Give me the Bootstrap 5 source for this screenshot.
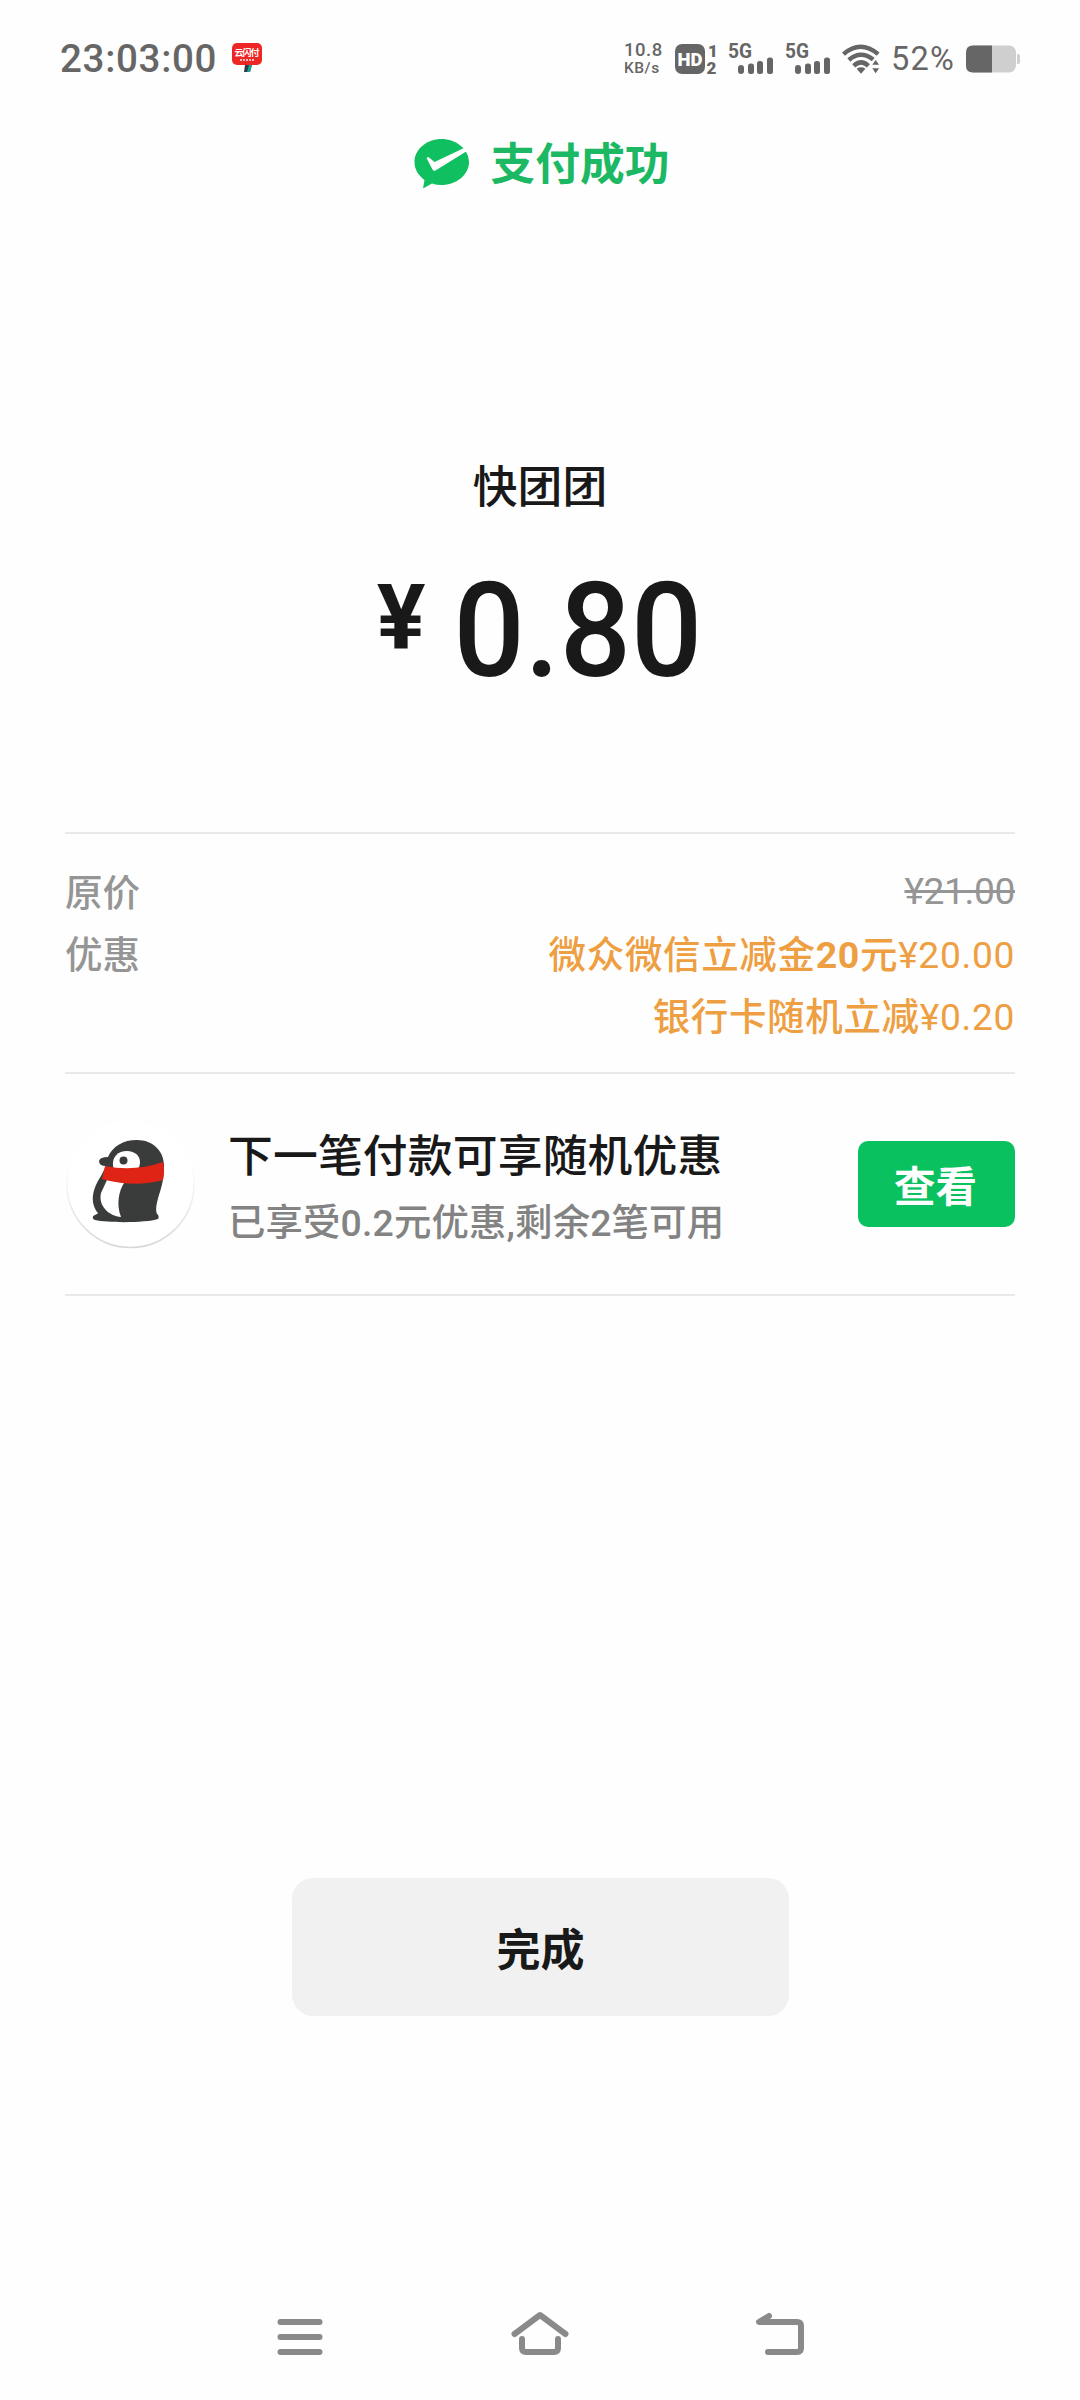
<!DOCTYPE html>
<html lang="zh-CN">
<head>
<meta charset="utf-8">
<meta name="viewport" content="width=device-width, initial-scale=1">
<title>支付成功</title>
<link rel="stylesheet" href="https://cdn.jsdelivr.net/npm/bootstrap@5.3.0/dist/css/bootstrap.min.css">
<style>
  body { background: #fefefe; color: #191919; font-family: Roboto, "Noto Sans CJK SC", sans-serif; }
  svg { display: block; flex: none; overflow: visible; }
  .screen { width: 1080px; height: 2400px; overflow: hidden; }
  .status { height: 117px; padding: 0 60px; color: #666; line-height: 1; }
  .clock { font-size: 38.5px; font-weight: 500; width: 172px; letter-spacing: .7px; padding-top: 2px; }
  .speed { width: 51px; font-weight: 500; }
  .speed-num { font-size: 18.5px; line-height: 19px; letter-spacing: .5px; }
  .speed-unit { font-size: 15.5px; line-height: 16px; letter-spacing: .5px; }
  .pct { font-size: 32.5px; width: 75px; letter-spacing: 1.2px; padding-top: 1px; }
  .result { height: 94px; padding: 3px 0 0 4px; gap: 20px; color: #1cb864; font-size: 44.8px; font-weight: 700; line-height: 1; }
  .payee { margin-top: 248px; height: 58px; font-size: 44.8px; line-height: 58px; font-weight: 500; }
  .amount { margin-top: 48px; height: 135px; padding-left: 5px; line-height: 1; font-weight: 500; }
  .yen { font-size: 91px; margin: 8px 21px 0 0; font-weight: 700; }
  .sum { font-size: 132px; transform: scaleX(.95); }
  .panel { margin: 132px 65px 0; }
  .rule { border-top: 2px solid #e9e9e9; }
  .prices { height: 240px; padding-top: 28px; font-size: 37.5px; line-height: 62px; font-weight: 500; }
  .muted { color: #959595; }
  .deal { color: #ee9f42; letter-spacing: .65px; }
  .fig { font-size: 37.2px; font-weight: 400; }
  .old { letter-spacing: -.4px; position: relative; top: -2px; }
  .promo { height: 222px; }
  .promo-text { padding-top: 8px; margin-left: 33px; }
  .promo-title { font-size: 44.8px; line-height: 60px; font-weight: 500; letter-spacing: .15px; }
  .promo-sub { font-size: 37.4px; line-height: 54px; font-weight: 500; color: #838383; margin-top: 9px; letter-spacing: .15px; }
  .view { width: 157px; height: 86px; border-radius: 10px; background: #0ac160; color: #fff; font-size: 41.5px; font-weight: 700; line-height: 1; padding: 7px 2px 0 0; border: 0; }
  .done { width: 497px; height: 138px; margin-top: 582px; border-radius: 21px; background: #f1f1f1; color: #191919; font-size: 44px; font-weight: 700; line-height: 1; padding: 8px 0 0 1px; border: 0; }
  .keys { margin-top: 296px; height: 50px; padding: 0 275px; }
</style>
</head>
<body>
<main class="screen d-flex flex-column">
  <header class="status d-flex align-items-center">
    <div class="clock">23:03:00</div>
    <svg width="31" height="31" viewBox="0 0 31 31">
      <path d="M13 22h7l-2 7h-6z" fill="#333a48"/><path d="M17 22h3l-2 7h-3z" fill="#14a595"/>
      <rect width="30" height="22" y="0" rx="5" fill="#ee2625"/>
      <text x="2.5" y="13" font-size="9" font-weight="700" fill="#fff" textLength="25">云闪付</text>
      <path d="M8 17h15" stroke="#fff" stroke-width="2" stroke-dasharray="2 1" opacity=".7"/>
    </svg>
    <div class="ms-auto d-flex align-items-center">
      <div class="speed"><div class="speed-num">10.8</div><div class="speed-unit">KB/s</div></div>
      <svg width="53" height="30" viewBox="0 0 53 30" fill="#666">
        <rect width="30" height="30" rx="7"/>
        <text x="2.500" y="22" font-size="19" font-weight="900" fill="#fff" textLength="25" lengthAdjust="spacingAndGlyphs">HD</text>
        <text x="33" y="12.500" font-size="17" font-weight="900">1</text>
        <text x="31.500" y="29.500" font-size="17" font-weight="900">2</text>
      </svg>
      <svg width="57" height="30" viewBox="0 0 57 30" fill="#666">
        <text x="0" y="14" font-size="20" font-weight="700" textLength="24" lengthAdjust="spacingAndGlyphs">5G</text>
        <rect x="10" y="21" width="6" height="9" rx="3"/><rect x="20" y="19.500" width="6" height="10.500" rx="2.500"/><rect x="29" y="17" width="6" height="13" rx="2.500"/><rect x="39" y="13.500" width="6" height="16.500" rx="2.500"/>
      </svg>
      <svg width="57" height="30" viewBox="0 0 57 30" fill="#666">
        <text x="0" y="14" font-size="20" font-weight="700" textLength="24" lengthAdjust="spacingAndGlyphs">5G</text>
        <rect x="10" y="21" width="6" height="9" rx="3"/><rect x="20" y="19.500" width="6" height="10.500" rx="2.500"/><rect x="29" y="17" width="6" height="13" rx="2.500"/><rect x="39" y="13.500" width="6" height="16.500" rx="2.500"/>
      </svg>
      <svg class="me-2" width="41" height="30" viewBox="0 0 42 30">
        <g fill="none" stroke="#666" stroke-width="4.600"><path d="M1.500 10Q19 -5 37 10"/><path d="M7 16Q19 5.500 32 15.500"/><path d="M12 22Q19.500 15 27 22"/></g>
        <path d="M15 25q4.500-3 9 0l-4.500 5zM31 21l3.500-5 3.500 5zM31 24.500l3.500 5 3.500-5z" fill="#666"/>
      </svg>
      <div class="pct">52%</div>
      <svg width="54" height="28" viewBox="0 0 54 28">
        <rect width="50" height="27" y=".5" rx="7" fill="#cfcfcf"/><path d="M51 9h1q2 0 2 2v6q0 2-2 2h-1z" fill="#cfcfcf"/>
        <path d="M7 .5h19v27H7q-7 0-7-7v-13q0-7 7-7z" fill="#666"/>
      </svg>
    </div>
  </header>

  <section class="result d-flex justify-content-center align-items-center">
    <svg class="mb-1" width="56" height="52" viewBox="0 0 56 52">
      <path d="M27.500 1C42 1 55 11 55 24S42 47 27.500 47q-5 0-9.500-1.500L9 50.500l1.500-8.500C4.500 37.500.500 31.500.500 24 .500 11 13 1 27.500 1z" fill="#10bf5f"/>
      <path d="M12.500 20l2-1 6 5L50 10l3 3L21.500 32.500q-2 1-3-1z" fill="#fefefe"/>
    </svg>
    <span>支付成功</span>
  </section>

  <div class="payee text-center">快团团</div>
  <div class="amount d-flex justify-content-center align-items-start"><span class="yen">¥</span><span class="sum">0.80</span></div>

  <section class="panel">
    <div class="prices rule">
      <div class="d-flex justify-content-between muted"><span>原价</span><s class="fig old">¥21.00</s></div>
      <div class="d-flex justify-content-between"><span class="muted">优惠</span>
        <div class="deal text-end">
          <div>微众微信立减金<b>20</b>元<span class="fig">¥20.00</span></div>
          <div>银行卡随机立减<span class="fig">¥0.20</span></div>
        </div>
      </div>
    </div>
    <div class="promo rule d-flex align-items-center">
      <svg width="130" height="130" viewBox="0 0 130 130">
        <defs><linearGradient id="ring" x2="0" y2="1"><stop offset=".35" stop-color="#fefefe"/><stop offset="1" stop-color="#d8d8d8"/></linearGradient></defs>
        <circle cx="65.500" cy="65" r="63.500" fill="#fff" stroke="url(#ring)" stroke-width="1.500"/>
        <g transform="translate(0 1)">
          <path d="M43 37C48 26 58 20 72 20c16 0 27 11 27 26 0 12-2 20-5 29-2 7-4 14-2 19 2 1 2 4 1 5-12 4-50 4-63 1-3-1-3-4 0-5 1-1 3-1 3-2C24 82 28 68 36 56l5-10q-7 0-7-5 1-4 9-4z" fill="#3a3c3b"/>
          <path d="M42 60l17 3c-5 8-8 21-3 34C44 96 33 86 36 73z" fill="#fff"/>
          <path d="M48 46c-1-9 5-15 14-15 8 0 13 5 13 11 0 3-1 6-3 8H49z" fill="#fff"/><circle cx="58.500" cy="40.500" r="4" fill="#3a3c3b"/>
          <path d="M40 46q29 6 58-4 2 8 0 18-29 8-61-1z" fill="#df2416"/>
        </g>
      </svg>
      <div class="promo-text">
        <div class="promo-title">下一笔付款可享随机优惠</div>
        <div class="promo-sub">已享受0.2元优惠,剩余2笔可用</div>
      </div>
      <button class="btn view ms-auto">查看</button>
    </div>
    <div class="rule"></div>
  </section>

  <button class="btn done align-self-center">完成</button>

  <nav class="keys d-flex justify-content-between align-items-center">
    <svg width="50" height="50" viewBox="0 0 50 50" stroke="#8a8a8a" stroke-width="6" stroke-linecap="round"><path d="M5.500 10h39M5.500 25h39M5.500 40h39"/></svg>
    <svg width="60" height="50" viewBox="0 0 60 50" fill="none" stroke="#8a8a8a" stroke-width="6" stroke-linecap="round" stroke-linejoin="round"><path d="M4.500 22L30 3l25.500 19M12 27v9q0 4 4 4h28q4 0 4-4v-9"/></svg>
    <svg width="50" height="50" viewBox="0 0 50 50" fill="none" stroke="#8a8a8a" stroke-width="6" stroke-linecap="round" stroke-linejoin="round"><path d="M14 4L4 10h38q4 0 4 4v22q0 4-4 4H13"/></svg>
  </nav>
</main>
<script src="https://cdn.jsdelivr.net/npm/bootstrap@5.3.0/dist/js/bootstrap.bundle.min.js"></script>
</body>
</html>
